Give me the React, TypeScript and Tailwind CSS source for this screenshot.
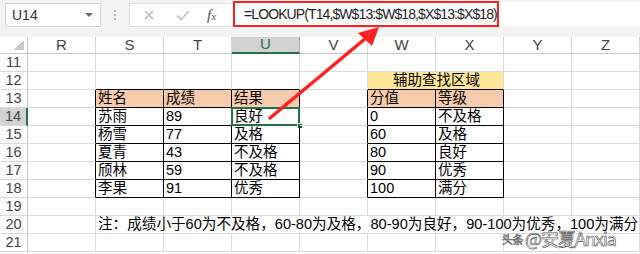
import React from 'react';

const COLS = ['R', 'S', 'T', 'U', 'V', 'W', 'X', 'Y', 'Z'];
const ROWS = [11, 12, 13, 14, 15, 16, 17, 18, 19, 20, 21];

const GRID = 'border-[#dadada]';

const scoreTable: Record<number, [string, string, string]> = {
  13: ['姓名', '成绩', '结果'],
  14: ['苏雨', '89', '良好'],
  15: ['杨雪', '77', '及格'],
  16: ['夏青', '43', '不及格'],
  17: ['颀林', '59', '不及格'],
  18: ['李果', '91', '优秀'],
};

const lookupTable: Record<number, [string, string]> = {
  13: ['分值', '等级'],
  14: ['0', '不及格'],
  15: ['60', '及格'],
  16: ['80', '良好'],
  17: ['90', '优秀'],
  18: ['100', '满分'],
};

const inTable = (r: number) => r >= 13 && r <= 18;

function Cell({
  row,
  col,
  children,
  span = 1,
  bg = '',
  extra = '',
}: {
  row: number;
  col: number;
  children?: React.ReactNode;
  span?: number;
  bg?: string;
  extra?: string;
}) {
  // right edge: black when cell belongs to a table or sits just left of one
  const rightBlack = inTable(row) && col <= 6;
  // bottom edge: black for table cells and the row above each table
  const bottomBlack =
    (inTable(row) && ((col >= 1 && col <= 3) || col === 5 || col === 6)) ||
    (row === 12 && ((col >= 1 && col <= 3) || col === 5));
  const spanClass = span === 2 ? 'col-span-2' : span === 8 ? 'col-span-8' : '';
  return (
    <div
      className={`relative h-[18px] border-r border-b ${rightBlack ? 'border-r-black' : 'border-r-[#dadada]'} ${
        bottomBlack ? 'border-b-black' : 'border-b-[#dadada]'
      } ${bg} ${spanClass} ${extra} flex items-end pl-[2px] text-[14.5px] leading-[17px] text-black whitespace-nowrap`}
    >
      {children}
    </div>
  );
}

function renderRow(r: number) {
  const cells: React.ReactNode[] = [];
  const selectedRow = r === 14;
  cells.push(
    <div
      key={`h${r}`}
      className={`h-[18px] border-b ${GRID} ${
        selectedRow ? 'bg-[#d2d2d2] border-r-2 border-r-[#217346]' : 'bg-white border-r border-r-[#c8c8c8]'
      } flex items-center justify-center text-[14.5px] text-[#444]`}
    >
      {r}
    </div>
  );

  let c = 0;
  while (c < COLS.length) {
    if (r === 12 && c === 5) {
      cells.push(
        <Cell key={`${r}-${c}`} row={r} col={c} span={2} bg="bg-[#ffe699]" extra="justify-center pl-0 text-[#ff2b1a]">
          辅助查找区域
        </Cell>
      );
      c += 2;
      continue;
    }
    if (r === 20 && c === 1) {
      cells.push(
        <Cell key={`${r}-${c}`} row={r} col={c} span={8} extra="text-[14.6px] text-[#222]">
          注：成绩小于60为不及格，60-80为及格，80-90为良好，90-100为优秀，100为满分
        </Cell>
      );
      c += 8;
      continue;
    }
    let content: React.ReactNode = null;
    let bg = '';
    if (inTable(r) && c >= 1 && c <= 3) {
      content = scoreTable[r][c - 1];
      if (r === 13) bg = 'bg-[#f8cbad]';
    }
    if (inTable(r) && (c === 5 || c === 6)) {
      content = lookupTable[r][c - 5];
      if (r === 13) bg = 'bg-[#f8cbad]';
    }
    const selected = r === 14 && c === 3;
    cells.push(
      <Cell key={`${r}-${c}`} row={r} col={c} bg={bg}>
        {content}
        {selected && (
          <>
            <div className="absolute -left-[1px] -top-[1px] -right-[1px] -bottom-[1px] border-2 border-[#217346] pointer-events-none" />
            <div className="absolute -right-[4px] -bottom-[4px] w-[6px] h-[6px] bg-[#217346] border border-white" />
          </>
        )}
      </Cell>
    );
    c += 1;
  }
  return cells;
}

export default function App() {
  const font = "font-['Liberation_Sans','Noto_Sans_CJK_SC',sans-serif]";
  return (
    <div className={`relative w-[640px] h-[254px] overflow-hidden bg-white ${font}`}>
      {/* formula bar */}
      <div className="h-[37px] bg-[#f3f3f3] flex items-start pt-[3px] pl-[5px]">
        <div className="w-[96px] h-[24px] bg-white border border-[#d6d6d6] flex items-center justify-between pl-[6px] pr-[7px] text-[14px] text-[#333]">
          <span>U14</span>
          <span className="w-0 h-0 border-l-[4px] border-r-[4px] border-t-[4px] border-l-transparent border-r-transparent border-t-[#6b6b6b]" />
        </div>
        <div className="w-[28px] h-[24px] flex flex-col items-center justify-center gap-[2px]">
          <span className="w-[2px] h-[2px] bg-[#b5b5b5]" />
          <span className="w-[2px] h-[2px] bg-[#b5b5b5]" />
          <span className="w-[2px] h-[2px] bg-[#b5b5b5]" />
        </div>
        <div className="w-[104px] h-[24px] bg-white border border-[#e0e0e0] border-r-0 flex items-center">
          <svg width="34" height="24" viewBox="0 0 34 24" className="ml-[3px]">
            <path d="M12 8 L20 16 M20 8 L12 16" stroke="#bdbdbd" strokeWidth="1.6" />
          </svg>
          <svg width="34" height="24" viewBox="0 0 34 24">
            <path d="M10 12.5 L14 16.5 L22 8" stroke="#c4c4c4" strokeWidth="1.8" fill="none" />
          </svg>
          <span className="ml-[6px] text-[15px] italic text-[#555] font-['Liberation_Serif',serif]">
            f<span className="text-[11px]">x</span>
          </span>
        </div>
        <div className="flex-1 h-[24px] bg-white flex items-center -mt-[1px]">
          <div className="w-[266px] h-[26px] border-[2.5px] border-[#ff1f1f] flex items-center pl-[9px] text-[14px] text-[#222] tracking-[-0.9px] whitespace-nowrap">
            =LOOKUP(T14,$W$13:$W$18,$X$13:$X$18)
          </div>
        </div>
      </div>

      {/* sheet */}
      <div className="grid grid-cols-[28px_repeat(9,68px)]">
        <div className="h-[17px] bg-white border-r border-b border-[#c8c8c8] relative">
          <div className="absolute right-[3px] bottom-[3px] w-[10px] h-[10px] bg-[linear-gradient(135deg,transparent_50%,#c9c9c9_50%)]" />
        </div>
        {COLS.map((c) => (
          <div
            key={c}
            className={`h-[17px] flex items-center justify-center text-[15px] ${
              c === 'U'
                ? 'bg-[#d2d2d2] border-b-2 border-b-[#217346] border-r border-r-[#ababab] text-[#217346]'
                : 'bg-white border-b border-b-[#c8c8c8] border-r border-r-[#d4d4d4] text-[#444]'
            }`}
          >
            {c}
          </div>
        ))}
        {ROWS.map((r) => renderRow(r))}
      </div>

      {/* red arrow */}
      <svg className="absolute left-0 top-0 pointer-events-none" width="640" height="254">
        <line x1="270" y1="118" x2="366" y2="38" stroke="#ff2020" strokeWidth="3.5" strokeLinecap="round" />
        <polygon points="379,27 358,33 372,46" fill="#ff2020" />
      </svg>

      {/* watermark */}
      <div className="absolute left-[502px] top-[227px] flex items-end whitespace-nowrap text-white/85 font-['Noto_Sans_CJK_SC',sans-serif] [-webkit-text-stroke:0.6px_#555]">
        <span className="text-[11px] leading-[20px] tracking-[-0.5px]">头条</span>
        <span className="ml-[2px] text-[18px] leading-[22px] tracking-[-1px]">@安夏Anxia</span>
      </div>
    </div>
  );
}
